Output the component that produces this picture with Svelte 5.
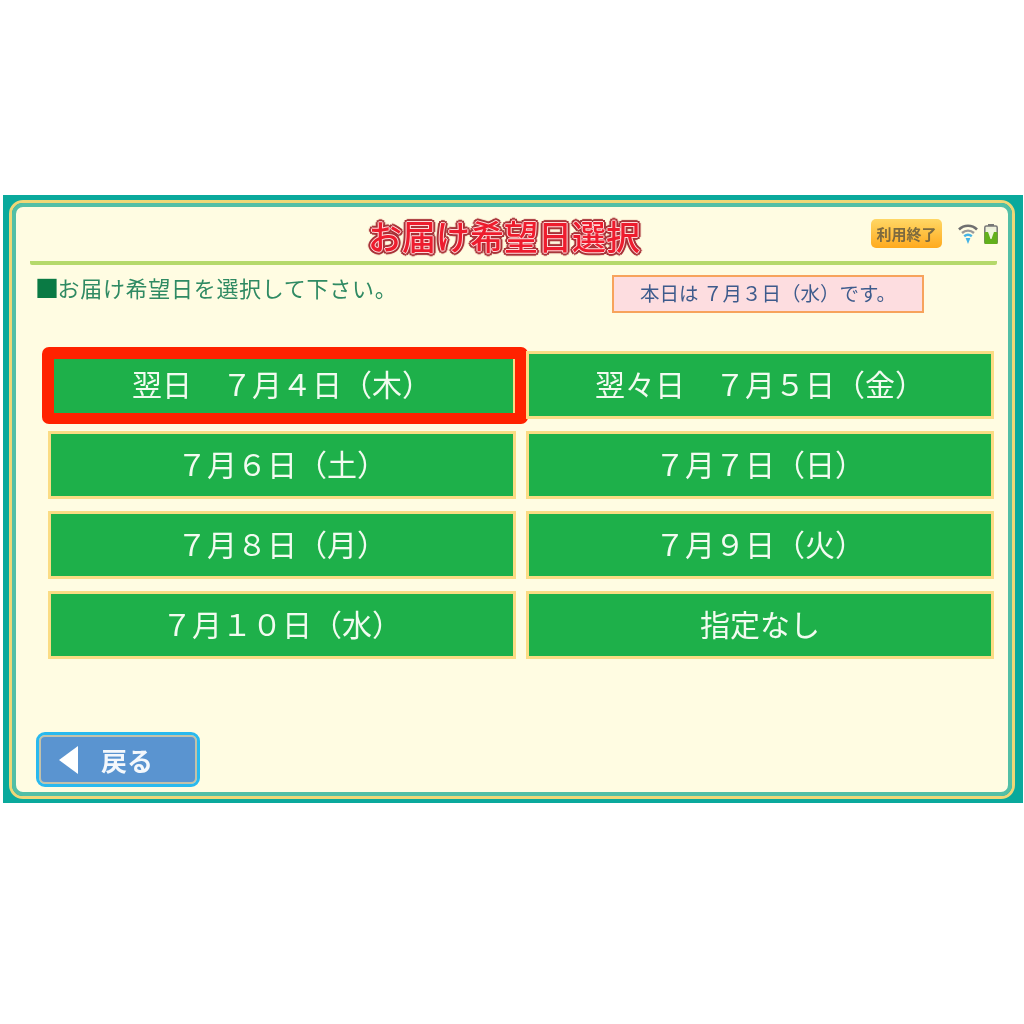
<script lang="ts">
  const days = [
    { label: '翌日　７月４日（木）', selected: true },
    { label: '翌々日　７月５日（金）' },
    { label: '７月６日（土）' },
    { label: '７月７日（日）' },
    { label: '７月８日（月）' },
    { label: '７月９日（火）' },
    { label: '７月１０日（水）' },
    { label: '指定なし' }
  ];
</script>

<div class="screen">
  <div class="frame">
    <div class="inner">
      <header class="head">
        <h1 class="title">お届け希望日選択</h1>
        <div class="status">
          <button class="quit">利用終了</button>
          <svg class="wifi" viewBox="0 0 20 20" aria-label="wifi">
            <path d="M1 5.5 C6 0.5 14 0.5 19 5.5" fill="none" stroke="#6f6f6f" stroke-width="2.6"/>
            <path d="M4 9 C7.5 5.8 12.5 5.8 16 9" fill="none" stroke="#9a9a9a" stroke-width="2.4"/>
            <path d="M6.2 12.2 C8.5 10.4 11.5 10.4 13.8 12.2" fill="none" stroke="#45b4e6" stroke-width="2.4"/>
            <path d="M7.6 14 H12.4 L10 20 Z" fill="#45b4e6"/>
          </svg>
          <svg class="battery" viewBox="0 0 14 20" aria-label="battery">
            <rect x="4" y="0" width="6" height="3" fill="#777"/>
            <rect x="0.8" y="2" width="12.4" height="17.5" rx="1.5" fill="#eef0da" stroke="#777" stroke-width="1.5"/>
            <rect x="0.5" y="8" width="13" height="12" rx="1" fill="#62b01c"/>
            <path d="M3 5 H11 L7.5 15 H6.5 Z" fill="#eff6dc"/>
          </svg>
        </div>
      </header>

      <div class="info">
        <p class="lead">■お届け希望日を選択して下さい。</p>
        <p class="today">本日は ７月３日（水）です。</p>
      </div>

      <div class="grid">
        {#each days as day}
          <button class="day" class:selected={day.selected}>{day.label}</button>
        {/each}
      </div>

      <button class="back">
        <svg viewBox="0 0 19 28" class="arrow"><path d="M19 0 V28 L0 14 Z" fill="#fff"/></svg>
        <span>戻る</span>
      </button>
    </div>
  </div>
</div>

<style>
  :global(body) {
    margin: 0;
    background: #fff;
  }
  .screen {
    box-sizing: border-box;
    width: 1020px;
    height: 608px;
    margin: 195px 0 0 3px;
    padding: 5px 8px 4px 6px;
    background: #0aa99c;
    font-family: "Noto Sans CJK JP", "Noto Sans", sans-serif;
    filter: blur(0.7px);
  }
  .frame {
    box-sizing: border-box;
    height: 100%;
    border: 3px solid #efd777;
    border-radius: 14px;
  }
  .inner {
    box-sizing: border-box;
    height: 100%;
    display: flex;
    flex-direction: column;
    padding: 0 11px 5px 14px;
    background: #fffce2;
    border: 4px solid #52bfa6;
    border-radius: 11px;
  }
  .head {
    display: grid;
    grid-template-columns: 1fr auto 1fr;
    align-items: center;
    height: 54px;
    border-bottom: 4px solid #b5d96b;
    border-radius: 2px;
  }
  .title {
    grid-column: 2;
    margin: 4px 19px 0 0;
    font-size: 34px;
    font-weight: 500;
    line-height: 40px;
    color: #ee1c2e;
    text-shadow:
      1px 0 0 #ffd9d9, -1px 0 0 #ffd9d9, 0 1px 0 #ffd9d9, 0 -1px 0 #ffd9d9,
      2px 0 0 #a83238, -2px 0 0 #a83238, 0 2px 0 #a83238, 0 -2px 0 #a83238,
      2px 2px 0 #a83238, -2px 2px 0 #a83238, 2px -2px 0 #a83238, -2px -2px 0 #a83238,
      3px 0 1px #a83238, -3px 0 1px #a83238, 0 3px 1px #a83238, 0 -3px 1px #a83238;
  }
  .status {
    grid-column: 3;
    display: flex;
    align-items: center;
    justify-content: flex-end;
    gap: 6px;
    margin-right: -1px;
    margin-bottom: 1px;
  }
  .quit {
    width: 71px;
    height: 29px;
    padding: 0;
    margin-right: 10px;
    border: none;
    border-radius: 5px;
    background: linear-gradient(#ffd765, #ffaa1e);
    color: #7d6a3f;
    font: 700 15px/29px "Noto Sans CJK JP", sans-serif;
  }
  .wifi {
    width: 20px;
    height: 20px;
  }
  .battery {
    width: 14px;
    height: 20px;
  }
  .info {
    display: flex;
    height: 86px;
    align-items: flex-start;
  }
  .lead {
    margin: 7px 0 0 5px;
    width: 577px;
    font-size: 22px;
    letter-spacing: 0.7px;
    line-height: 30px;
    color: #2f8a63;
  }
  .lead::first-letter {
    font-size: 24px;
    letter-spacing: -1.5px;
    color: #0a7a44;
  }
  .today {
    box-sizing: border-box;
    width: 312px;
    height: 38px;
    margin: 10px 0 0 0;
    border: 2px solid #f7a35c;
    background: #fddde0;
    color: #3d5b8c;
    font-size: 19.5px;
    line-height: 32px;
    text-align: center;
  }
  .grid {
    display: grid;
    grid-template-columns: 468px 468px;
    grid-auto-rows: 68px;
    gap: 12px 10px;
    margin-left: 18px;
  }
  .day {
    position: relative;
    padding: 0 0 4px;
    border: 3px solid #fbdc84;
    background: #1eb04a;
    color: #f2fbf0;
    font: 400 30px/1 "Noto Sans CJK JP", sans-serif;
  }
  .day.selected::after {
    content: "";
    position: absolute;
    left: -9px;
    top: -7px;
    right: -15px;
    bottom: -8px;
    border: solid #ff2200;
    border-width: 12px 13px 11px 12px;
    border-radius: 7px;
  }
  .back {
    box-sizing: border-box;
    width: 158px;
    height: 49px;
    margin: 76px 0 0 9px;
    padding: 0 0 0 18px;
    display: flex;
    align-items: center;
    gap: 23px;
    background: #5a94d0;
    border: 2px solid #c3c1a9;
    border-radius: 6px;
    outline: 3px solid #29b9ee;
    color: #f4f8fc;
    font: 700 26px/1 "Noto Sans CJK JP", sans-serif;
  }
  .arrow {
    width: 19px;
    height: 28px;
  }
</style>
